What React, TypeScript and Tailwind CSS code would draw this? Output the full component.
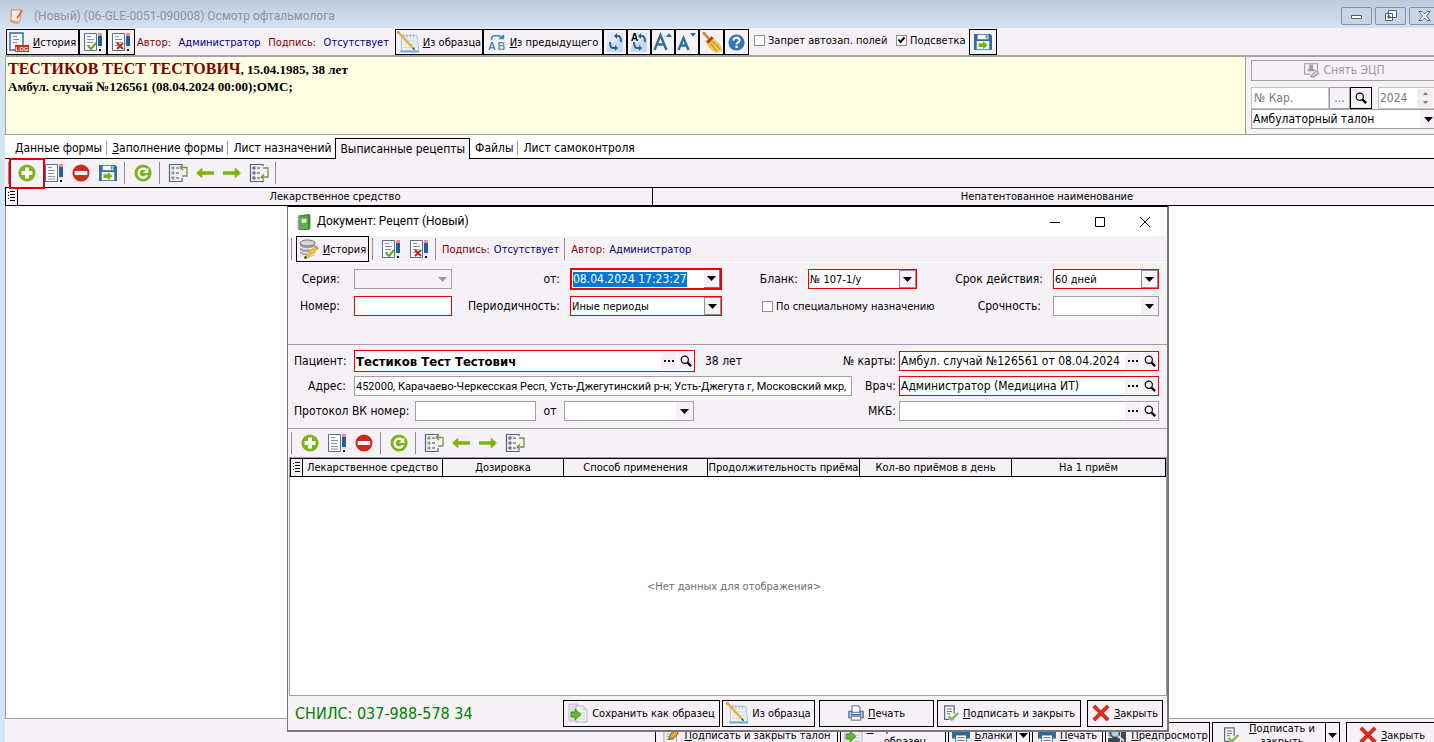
import { Fragment, type ReactNode } from "react";
import clsx from "clsx";

/* ---------- icons ---------- */

function Svg({ size = 20, children }: { size?: number; children: ReactNode }) {
  return (
    <svg width={size} height={size} viewBox="0 0 20 20" fill="none" className="shrink-0" aria-hidden="true">
      {children}
    </svg>
  );
}

function DocPencil({ mark }: { mark?: "check" | "cross" }) {
  return (
    <Svg>
      <path d="M1.5 1.5h12v17h-12z" fill="#fbfafb" stroke="#5b7088" />
      <path d="M4 4.5h4M4 7.5h7M4 10.5h6M4 13.5h3" stroke="#8a929c" />
      {!mark && <path d="M6 13.5h5M4 16h7" stroke="#8a929c" />}
      <path d="M15 1h4v3h-4z" fill="#f08d88" />
      <path d="M15 4h4v10h-4z" fill="#1f609c" />
      <path d="M15 14h4l-1 2h-2z" fill="#ecdcc0" />
      <path d="M16 17h2v2h-2z" fill="#111" />
      {mark === "check" && <path d="m5 14 3 3 5-6" stroke="#66a51c" strokeWidth="2" />}
      {mark === "cross" && <path d="m6 11 6 6m0-6-6 6" stroke="#b92a1e" strokeWidth="2" />}
    </Svg>
  );
}

const LogIcon = () => (
  <Svg size={20}>
    <path d="M1 1h13v17H1z" fill="#fff" stroke="#2f689b" strokeWidth="1.4" />
    <path d="M4 4.5h4M4 7.5h6M4 10.5h4" stroke="#888" />
    <path d="M6 13h14v7H6z" fill="#c22d20" />
    <text x="6.5" y="19" fontSize="6" fontWeight="bold" fill="#fff" fontFamily="Liberation Sans, sans-serif">LOG</text>
  </Svg>
);

const PlusIcon = () => (
  <Svg size={18}>
    <circle cx="10" cy="10" r="9.5" fill="#7ab41a" />
    <path d="M10 4v12M4 10h12" stroke="#fff" strokeWidth="4.4" />
  </Svg>
);

const MinusIcon = () => (
  <Svg size={18}>
    <circle cx="10" cy="10" r="9.5" fill="#cc2a1b" />
    <path d="M3 10h14" stroke="#fff" strokeWidth="4.4" />
  </Svg>
);

const RefreshIcon = () => (
  <Svg size={18}>
    <circle cx="10" cy="10" r="9.5" fill="#7ab41a" />
    <path d="M14.5 12.5a5 5 0 1 1-.5-5.500" stroke="#fff" strokeWidth="2.6" />
    <path d="M16 4v6h-6z" fill="#fff" />
  </Svg>
);

const SaveIcon = () => (
  <Svg size={18}>
    <path d="M0 1h18l2 2v16H0z" fill="#2e6f9f" />
    <path d="M4 2h12v5H4zM3 9h14v9H3z" fill="#f5f4f4" />
    <path d="M13 2h2v4h-2z" fill="#8a8a8a" />
    <path d="M5 11.5h5V9l5 4.500-5 4.500v-2.500H5z" fill="#7bb512" />
  </Svg>
);

function ArrowIcon({ left }: { left?: boolean }) {
  return (
    <Svg size={18}>
      <path d={left ? "M0 10l7-6v4h13v4H7v4z" : "M20 10l-7-6v4H0v4h13v4z"} fill="#7cb60c" />
    </Svg>
  );
}

function TreeIcon({ up }: { up?: boolean }) {
  return (
    <Svg size={20}>
      <path d={up ? "M14 3V1.500H1.500v17H14V15" : "M14 3V1.500H1.500v17H14V17"} stroke="#4f6880" strokeWidth="1.2" />
      <path d="M4 4h2v2H4zM4 9h2v2H4zM4 14h2v2H4z" stroke={up ? "#5f8a35" : "#444"} strokeWidth=".9" />
      <path d="M8 5h3M8 10h3M8 15h3" stroke="#444" />
      {up ? (
        <path d="M12 4.500h7V13h-5m-2-8.500 3-2.500m-3 2.500L15 7" stroke="#74973f" strokeWidth="1.300" />
      ) : (
        <path d="M14 5h5v9h-7m0 0 3-2.500M12 14l3 2.500" stroke="#74973f" strokeWidth="1.300" />
      )}
    </Svg>
  );
}

const NotebookIcon = () => (
  <Svg size={22}>
    <path d="M4 4h14l2 15H4z" fill="#e9f1f8" stroke="#9fc0dc" strokeWidth=".8" />
    <path d="M6 3v3M9 3v3M12 3v3M15 3v3" stroke="#aab4bd" />
    <path d="M6 9h11M6 12h11M6 15h12" stroke="#c9d9e7" strokeWidth=".8" />
    <path d="M3 18.500h17" stroke="#62a3d4" strokeWidth="1.500" />
    <path d="m1 1 14 15" stroke="#f0ad22" strokeWidth="2" />
    <path d="m0 0 2 2" stroke="#e98d78" strokeWidth="2.400" />
    <path d="m14.500 15.500 1.500 1.500" stroke="#333" strokeWidth="1.200" />
  </Svg>
);

const AbIcon = () => (
  <Svg size={18}>
    <text x="0" y="19" fontSize="12" fontWeight="bold" fill="#5289b8" fontFamily="Liberation Sans, sans-serif">A</text>
    <text x="10.500" y="19" fontSize="12" fontWeight="bold" fill="#63a08f" fontFamily="Liberation Sans, sans-serif">B</text>
    <path d="M4 8V6q0-3 3-3h4q4 0 5 3" stroke="#4186bd" strokeWidth="1.800" />
    <path d="M11 7h7V1z" fill="#4186bd" />
  </Svg>
);

function SyncPage({ letter }: { letter?: boolean }) {
  return (
    <Svg>
      <path d="M2 0h16v20H2z" fill="#dfebf8" />
      <path d="M2 15 18 5v15H2z" fill="#c3daf1" />
      <path d="M11 4h2q3 0 3 6" stroke="#2c5f8c" strokeWidth="2" />
      <path d="M12 1v6L9 4z" fill="#2c5f8c" />
      <path d="M5 10q0 6 3 6h2" stroke="#2c5f8c" strokeWidth="2" />
      <path d="M10 13v6l3-3z" fill="#2c5f8c" />
      {letter && <text x="2" y="9" fontSize="10" fontWeight="bold" fill="#000" fontFamily="Liberation Sans, sans-serif">A</text>}
    </Svg>
  );
}

function FontSizeIcon({ up }: { up?: boolean }) {
  return (
    <Svg size={20}>
      <path
        d={up ? "M1.500 18 7.500 3l6 15M4 12.500h7" : "M1.500 18 6.500 6l5 12M3.500 13.500h6"}
        stroke="#2f6e9e"
        strokeWidth="2.400"
      />
      <path d={up ? "m13 5 3-4 3 4z" : "m13 1 3 4 3-4z"} fill="#2f6e9e" />
    </Svg>
  );
}

const BroomIcon = () => (
  <Svg size={21}>
    <path d="m2 0 6 7" stroke="#c38a45" strokeWidth="2.600" />
    <path d="m4 9 6-5 8 8q2 3 2 6l-6 2q-6-3-10-11z" fill="#e9c94d" />
    <path d="m5 9 5-5 2 2-5 5z" fill="#bf3426" />
    <path d="m9 11 6 7m-4-9 7 7" stroke="#b4922a" />
  </Svg>
);

const HelpIcon = () => (
  <Svg size={17}>
    <circle cx="10" cy="10" r="9.500" fill="#3a77b8" />
    <path d="M6.500 7.500q0-3 3.500-3t3.500 3q0 1.500-2 2.500-1.500 1-1.500 2.500" stroke="#fff" strokeWidth="2.400" />
    <path d="M8.800 14h2.600v2.500H8.800z" fill="#fff" />
  </Svg>
);

const DatabaseIcon = () => (
  <Svg>
    <path d="M1 4v12q8 4 15 0V4z" fill="#a5a5a5" />
    <path d="M1 8q7 4 15 0M1 12q7 4 15 0M1 15q7 4 15 0" stroke="#fff" />
    <ellipse cx="8.500" cy="4" rx="7.500" ry="3" fill="#d6d6d6" stroke="#777" />
    <path d="m8 18 9-9" stroke="#f3bd2b" strokeWidth="4" />
    <path d="m16 7 3 3" stroke="#e98275" strokeWidth="2.400" />
    <path d="m5 20 1-3.500L8.500 19z" fill="#333" />
  </Svg>
);

const BookIcon = () => (
  <Svg size={16}>
    <path d="M3 2 16 0l2 1v17l-2 2H3z" fill="#3f8b35" />
    <path d="M4 3h11v16H4z" fill="#63ab50" />
    <path d="M1 5h4M1 8h4M1 11h4M1 14h4M1 17h4" stroke="#999" />
    <path d="M7 6h6v5H7z" fill="#d8efcf" />
  </Svg>
);

const PageIcon = () => (
  <Svg size={16}>
    <path d="M4 2q7 1 12 0l-1 14q-1 3-3 3-6 0-9-2 2-7 1-15z" fill="#fae7da" stroke="#d9956e" strokeWidth="1.500" />
    <path d="m18 3-7 10" stroke="#b45745" strokeWidth="1.600" />
    <path d="M3 15q4 3 10 3" stroke="#d79a75" strokeWidth="2" />
  </Svg>
);

const CopyIcon = () => (
  <Svg>
    <path d="M1 1h9v17H1z" fill="#e0e0e0" stroke="#c0c0c0" />
    <path d="M8 3h7l4 4v12H8z" fill="#f1f2f2" stroke="#b5b9bb" />
    <path d="M15 3v4h4M11 10h6M11 13h6M11 16h6" stroke="#c3c6c8" />
    <path d="M3 9h4V6l6 5.500L7 17v-3H3z" fill="#68b438" stroke="#3b8420" strokeWidth=".8" />
  </Svg>
);

const PrinterIcon = ({ size = 16 }: { size?: number }) => (
  <Svg size={size}>
    <path d="M5 1h8l2 2v6H5z" fill="#fff" stroke="#5476a5" strokeWidth="1.400" />
    <path d="M1 8h4v4h10V8h4v8H1z" fill="#a9c1e2" stroke="#4b6fa5" strokeWidth="1.400" />
    <path d="M4 14h12v5H4z" fill="#f4f4f4" stroke="#555" />
  </Svg>
);

const FlatPrinterIcon = () => (
  <Svg size={18}>
    <path d="M2 1h16v3H2zM0 6h20v8H0z" fill="#2d6999" />
    <path d="M4 10h12v10H4z" fill="#fff" stroke="#41566a" />
    <path d="M6 13h8M6 16h8" stroke="#556" />
  </Svg>
);

const SignIcon = () => (
  <Svg size={16}>
    <path d="M14 11V1H2v17h6" stroke="#5d6b75" strokeWidth="1.500" />
    <path d="M5 5h6M5 8h6M5 11h4" stroke="#6d7a83" strokeWidth="1.300" />
    <path d="m7 14 4 4 8-8" stroke="#86b357" strokeWidth="3" />
  </Svg>
);

const CrossIcon = () => (
  <Svg size={18}>
    <path d="m2 2 16 16M18 2 2 18" stroke="#d53120" strokeWidth="4.400" />
  </Svg>
);

const PenIcon = () => (
  <Svg size={18}>
    <path d="M1 2h14v18H1z" fill="#f2f2f2" stroke="#a5a5a5" />
    <path d="M4 9h5M4 12h4M4 15h8" stroke="#999" />
    <path d="m6 15 3-7 5-3 3 3-4 5z" fill="#eaa631" stroke="#7b5520" />
    <path d="m14 5 4-4 2 2-4 4z" fill="#333" />
  </Svg>
);

const PreviewIcon = () => (
  <Svg size={20}>
    <path d="M2 0h13v11H2z" fill="#edf3f7" stroke="#607184" />
    <path d="M14 6h5v11h-5zM1 13h12v4H1z" fill="#404952" />
    <circle cx="8" cy="8" r="4.500" fill="#a6d4ee" stroke="#33434f" strokeWidth="1.500" />
    <path d="m11 11 6 5" stroke="#dfe5ea" strokeWidth="2" />
  </Svg>
);

const StampIcon = () => (
  <Svg size={15}>
    <path d="M18 9V1H1v14h8" stroke="#999" strokeWidth="1.400" />
    <path d="M7 2h5v6h2v3H5V8h2z" fill="#9c9c9c" />
    <path d="m9 18 8-8 3 3-7 6z" fill="#ddd" stroke="#888" strokeWidth="1.400" />
  </Svg>
);

const SearchIcon = () => (
  <Svg size={12}>
    <circle cx="8" cy="8" r="6" stroke="#000" strokeWidth="2" />
    <path d="m12.500 12.500 6 6" stroke="#000" strokeWidth="4" />
  </Svg>
);

function Caret({ gray }: { gray?: boolean }) {
  return (
    <svg width="9" height="5" viewBox="0 0 9 5" className="shrink-0" aria-hidden="true">
      <path d="M0 0h9L4.500 5z" fill={gray ? "#9a9a9a" : "#000"} />
    </svg>
  );
}

const ListMark = () => (
  <svg width="8" height="11" viewBox="0 0 8 11" className="mx-auto" aria-hidden="true">
    <path d="M0 1.500h1M2 .5h5M0 4.500h1M2 3.500h5M0 7.500h1M2 6.500h5M2 9.500h5" stroke="#000" />
  </svg>
);

/* ---------- controls ---------- */

function Hot({ children }: { children: string }) {
  // first letter is the keyboard accelerator
  return (
    <span className="whitespace-nowrap">
      <u>{children[0]}</u>
      {children.slice(1)}
    </span>
  );
}

function PushButton({ className, children, label }: { className?: string; children: ReactNode; label?: string }) {
  return (
    <button
      type="button"
      aria-label={label}
      className={clsx("flex shrink-0 items-center justify-center gap-1 border border-black bg-[#f6f1f6]", className)}
    >
      {children}
    </button>
  );
}

function ToolButton({ label, children }: { label: string; children: ReactNode }) {
  return (
    <button type="button" aria-label={label} className="flex h-6 w-[27px] shrink-0 items-center justify-center">
      {children}
    </button>
  );
}

const Sep = () => <span className="mr-1 ml-[3px] h-[22px] w-px shrink-0 bg-[#8c8c90]" />;

type SelectProps = {
  id: string;
  value: string;
  red?: boolean;
  disabled?: boolean;
  flat?: boolean;
  className?: string;
};

function Select({ id, value, red, disabled, flat, className }: SelectProps) {
  return (
    <div
      className={clsx(
        "relative flex h-5 border",
        red ? "border-[#f00000]" : "border-[#a0a0a0]",
        disabled ? "bg-[#f6f1f6]" : "bg-white",
        className,
      )}
    >
      <select id={id} disabled={disabled} className="min-w-0 flex-1 appearance-none truncate pr-4 pl-px outline-none">
        <option>{value}</option>
      </select>
      <span
        className={clsx(
          "pointer-events-none absolute inset-y-0 right-0 flex w-[17px] items-center justify-center bg-[#f6f1f6]",
          !flat && !disabled && "border border-[#909090]",
        )}
      >
        <Caret gray={disabled} />
      </span>
    </div>
  );
}

function LookupField({ id, value, red, className }: { id: string; value?: string; red?: boolean; className?: string }) {
  return (
    <div className={clsx("flex items-center border bg-white", red ? "border-[#f00000]" : "border-[#a0a0a0]", className)}>
      <input id={id} defaultValue={value} className="min-w-0 flex-1 pl-px outline-none" />
      <button type="button" aria-label="Выбрать" className="flex h-4 w-4 items-center justify-center bg-[#f6f1f6]">
        <svg width="10" height="2" viewBox="0 0 10 2" aria-hidden="true">
          <path d="M0 0h2v2H0zM4 0h2v2H4zM8 0h2v2H8z" />
        </svg>
      </button>
      <button type="button" aria-label="Найти" className="ml-px flex h-4 w-4 items-center justify-center bg-[#f6f1f6]">
        <SearchIcon />
      </button>
    </div>
  );
}

function Tick({ id, checked, className, children }: { id: string; checked?: boolean; className?: string; children: string }) {
  return (
    <span className={clsx("flex shrink-0 items-center gap-[3px] whitespace-nowrap", className)}>
      <span className="relative flex">
        <input id={id} type="checkbox" defaultChecked={checked} className="peer size-[11px] appearance-none border border-[#909090] bg-white" />
        <svg viewBox="0 0 11 11" className="pointer-events-none absolute inset-0 hidden size-[11px] peer-checked:block" fill="none" aria-hidden="true">
          <path d="m2.500 4.500 2 2.500 4-4.500" stroke="#000" strokeWidth="2" />
        </svg>
      </span>
      <label htmlFor={id}>{children}</label>
    </span>
  );
}

function GridTools({ save }: { save?: boolean }) {
  return (
    <>
      <Sep />
      <ToolButton label="Добавить"><PlusIcon /></ToolButton>
      <ToolButton label="Изменить"><DocPencil /></ToolButton>
      <ToolButton label="Удалить"><MinusIcon /></ToolButton>
      {save && <ToolButton label="Сохранить"><SaveIcon /></ToolButton>}
      <Sep />
      <ToolButton label="Обновить"><RefreshIcon /></ToolButton>
      <Sep />
      <ToolButton label="Вверх"><TreeIcon up /></ToolButton>
      <ToolButton label="Назад"><ArrowIcon left /></ToolButton>
      <ToolButton label="Вперёд"><ArrowIcon /></ToolButton>
      <ToolButton label="Вниз"><TreeIcon /></ToolButton>
      {save && <Sep />}
    </>
  );
}

/* ---------- main window ---------- */

function TitleBar() {
  return (
    <header className="flex h-7 shrink-0 items-center bg-linear-to-b from-[#bccada] to-[#d5e3f2] pt-1 pr-0.5 pl-2 text-[#8e959e]">
      <PageIcon />
      <h1 className="ml-2.5 font-[Roboto,sans-serif] text-[12px]">(Новый) (06-GLE-0051-090008) Осмотр офтальмолога</h1>
      <div className="ml-auto flex gap-[3px]">
        {["Свернуть", "Восстановить", "Закрыть окно"].map((name, i) => (
          <button
            key={name}
            type="button"
            aria-label={name}
            className="flex h-[18px] w-[31px] items-center justify-center rounded-xs border border-[#8291a5] bg-[#c7d6e6]"
          >
            <svg width="13" height="12" viewBox="0 0 13 12" fill="#fff" stroke="#555c66" aria-hidden="true">
              {i === 0 && <path d="M1.500 5.500h10v3h-10z" />}
              {i === 1 && <path d="M4.500.500h8v7h-8zM1.500 3.500h7v7h-7zM4 6h2v2H4z" />}
              {i === 2 && <path d="M1 1.500h3l2.500 2.500L9 1.500h3L8.500 6l3.500 4.500H9L6.500 8 4 10.500H1L4.500 6z" />}
            </svg>
          </button>
        ))}
      </div>
    </header>
  );
}

function MainToolbar() {
  return (
    <div className="flex h-[29px] shrink-0 items-start border-b-2 border-[#a5a1a8] bg-[#f6f1f6] pt-px pl-px">
      <PushButton className="h-[26px] w-[73px] bg-[#ece6ec]"><LogIcon /><Hot>История</Hot></PushButton>
      <PushButton className="h-[26px] w-7" label="Подписать"><DocPencil mark="check" /></PushButton>
      <PushButton className="h-[26px] w-7" label="Снять подпись"><DocPencil mark="cross" /></PushButton>
      <div className="flex h-[26px] w-[260px] items-center justify-between pr-1.5 pl-0.5 whitespace-nowrap text-[#000080]">
        <span className="text-[#800000]">Автор:</span>
        <span>Администратор</span>
        <span className="text-[#800000]">Подпись:</span>
        <span>Отсутствует</span>
      </div>
      <PushButton className="h-[26px] w-[88px]"><NotebookIcon /><Hot>Из образца</Hot></PushButton>
      <PushButton className="h-[26px] w-[120px]"><AbIcon /><Hot>Из предыдущего</Hot></PushButton>
      <PushButton className="h-[26px] w-6" label="Обновить"><SyncPage /></PushButton>
      <PushButton className="h-[26px] w-6" label="Обновить всё"><SyncPage letter /></PushButton>
      <PushButton className="h-[26px] w-6" label="Крупнее"><FontSizeIcon up /></PushButton>
      <PushButton className="h-[26px] w-6" label="Мельче"><FontSizeIcon /></PushButton>
      <PushButton className="h-[26px] w-[25px]" label="Очистить"><BroomIcon /></PushButton>
      <PushButton className="h-[26px] w-[25px]" label="Справка"><HelpIcon /></PushButton>
      <Tick id="autofill" className="ml-[5px] h-[22px] w-[142px]">Запрет автозап. полей</Tick>
      <Tick id="highlight" className="h-[22px] w-[73px]" checked>Подсветка</Tick>
      <PushButton className="h-[26px] w-7" label="Сохранить"><SaveIcon /></PushButton>
    </div>
  );
}

function PatientPanel() {
  return (
    <div className="flex h-[78px] shrink-0 border-b border-[#a0a0a4] bg-[#f6f1f6]">
      <section className="flex-1 border-x border-[#a0a0a4] bg-[#ffffe1] pt-[3px] pl-0.5 font-['Liberation_Serif',serif] text-[13px] leading-4 font-bold">
        <p className="leading-[18px]"><span className="text-[16px] text-[#800000]">ТЕСТИКОВ ТЕСТ ТЕСТОВИЧ</span>, 15.04.1985, 38 лет</p>
        <p>Амбул. случай №126561 (08.04.2024 00:00);ОМС;</p>
      </section>
      <aside className="w-[196px] pt-[3px] pr-1 pl-[5px] text-[12px]">
        <button type="button" disabled className="flex h-[21px] w-full items-center justify-center gap-1 border border-[#a0a0a4] text-[#9a9a9a]">
          <StampIcon />Снять ЭЦП
        </button>
        <div className="mt-1.5 flex h-[22px] text-[#787878]">
          <input aria-label="Номер карты" defaultValue="№ Кар." className="w-[78px] border border-[#c4c4c4] bg-white pl-0.5" />
          <button type="button" aria-label="Выбрать карту" className="w-[21px] border border-[#a0a0a4]">...</button>
          <button type="button" aria-label="Найти карту" className="flex w-[22px] items-center justify-center border border-black"><SearchIcon /></button>
          <div className="ml-1.5 flex min-w-0 flex-1 border border-[#c4c4c4] bg-white">
            <input aria-label="Год" defaultValue="2024" className="min-w-0 flex-1 pl-px" />
            <span className="flex w-5 flex-col gap-px bg-white py-px pr-1">
              <span className="flex flex-1 items-center justify-center bg-[#f0ecf0]">
                <svg width="5" height="3" viewBox="0 0 5 3" fill="#777" aria-hidden="true"><path d="M0 3h5L2.500 0z" /></svg>
              </span>
              <span className="flex flex-1 items-center justify-center bg-[#f0ecf0]">
                <svg width="5" height="3" viewBox="0 0 5 3" fill="#777" aria-hidden="true"><path d="M0 0h5L2.500 3z" /></svg>
              </span>
            </span>
          </div>
        </div>
        <Select id="talon" value="Амбулаторный талон" flat className="w-full" />
      </aside>
    </div>
  );
}

const tabs = ["Данные формы", "Заполнение формы", "Лист назначений", "Выписанные рецепты", "Файлы", "Лист самоконтроля"];
const ACTIVE = 3;

function TabStrip() {
  return (
    <nav className="flex h-6 shrink-0 items-end border-b border-black bg-white pl-[5px] text-[12px]">
      {tabs.map((name, i) => (
        <Fragment key={name}>
          {i > 0 && i !== ACTIVE && i !== ACTIVE + 1 && <span className="mb-[3px] h-3.5 w-px bg-[#a0a0a4]" />}
          <button
            type="button"
            className={clsx(
              "h-[21px] pr-1 whitespace-nowrap",
              i === ACTIVE ? "-mb-px border border-b-0 border-black bg-[#f6f1f6] pl-1" : "pt-px pl-[5px]",
            )}
          >
            {i < 2 ? <Hot>{name}</Hot> : name}
          </button>
        </Fragment>
      ))}
    </nav>
  );
}

function MainFooter() {
  return (
    <footer className="flex h-6 shrink-0 items-start justify-end gap-0.5 border-t border-[#a0a0a4] bg-[#f6f1f6] pt-[3px] pr-1 leading-[13px]">
      <PushButton className="h-[26px] w-[183px]"><PenIcon /><Hot>Подписать и закрыть талон</Hot></PushButton>
      <PushButton className="h-[26px] w-[106px]">
        <CopyIcon />
        <span className="whitespace-nowrap"><u>С</u>охранить как<br />образец</span>
      </PushButton>
      <span className="flex">
        <PushButton className="h-[26px] w-[69px]"><FlatPrinterIcon /><Hot>Бланки</Hot></PushButton>
        <PushButton className="-ml-px h-[26px] w-[14px]" label="Список бланков"><Caret /></PushButton>
      </span>
      <PushButton className="h-[26px] w-[71px]"><FlatPrinterIcon /><Hot>Печать</Hot></PushButton>
      <PushButton className="h-[26px] w-[105px]"><PreviewIcon /><Hot>Предпросмотр</Hot></PushButton>
      <span className="flex">
        <PushButton className="h-[26px] w-[114px] gap-2.5">
          <SignIcon />
          <span><u>П</u>одписать и<br />закрыть</span>
        </PushButton>
        <PushButton className="-ml-px h-[26px] w-[15px]" label="Варианты подписи"><Caret /></PushButton>
      </span>
      <PushButton className="ml-1 h-[26px] w-[92px]"><CrossIcon /><Hot>Закрыть</Hot></PushButton>
    </footer>
  );
}

/* ---------- prescription dialog ---------- */

const columns = ["Лекарственное средство", "Дозировка", "Способ применения", "Продолжительность приёма", "Кол-во приёмов в день", "На 1 приём"];

function PrescriptionDialog() {
  return (
    <section
      role="dialog"
      aria-label="Рецепт"
      className="absolute top-[206px] left-[287px] flex h-[526px] w-[882px] flex-col border-2 border-t border-l border-[#77777b] border-t-black bg-[#f6f1f6]"
    >
      <header className="flex h-[29px] shrink-0 items-center bg-white pr-3 pl-2">
        <BookIcon />
        <h2 className="ml-[5px] font-[Roboto,sans-serif] text-[12px]">Документ: Рецепт (Новый)</h2>
        <div className="ml-auto flex gap-[25px]">
          {["M0 5.500h10", "M.500.500h9v9h-9z", "m0 0 10 10M10 0 0 10"].map((d, i) => (
            <button key={d} type="button" aria-label={["Свернуть", "Развернуть", "Закрыть"][i]} className="flex size-5 items-center justify-center">
              <svg width="10" height="10" viewBox="0 0 10 10" fill="none" stroke="#000" aria-hidden="true"><path d={d} /></svg>
            </button>
          ))}
        </div>
      </header>

      <div className="flex h-[27px] shrink-0 items-center border-b border-white">
        <Sep />
        <PushButton className="h-[26px] w-[73px] bg-[#ece6ec]"><DatabaseIcon /><Hot>История</Hot></PushButton>
        <Sep />
        <button type="button" aria-label="Подписать рецепт" className="flex w-7 justify-center"><DocPencil mark="check" /></button>
        <button type="button" aria-label="Снять подпись рецепта" className="flex w-7 justify-center"><DocPencil mark="cross" /></button>
        <span className="mr-1.5 ml-0.5 h-[22px] w-px bg-[#8c8c90]" />
        <p className="flex gap-1 text-[#000080]"><span className="text-[#800000]">Подпись:</span>Отсутствует</p>
        <span className="mr-1.5 ml-[5px] h-[22px] w-px bg-[#8c8c90]" />
        <p className="flex gap-1 text-[#000080]"><span className="text-[#800000]">Автор:</span>Администратор</p>
      </div>

      <div className="grid h-[82px] shrink-0 grid-cols-[66px_98px_118px_152px_86px_109px_136px_106px] content-start items-center gap-y-1.5 border-b border-[#a0a0a4] pt-[5px]">
        <label htmlFor="series" className="pr-3.5 text-right text-[12px]">Серия:</label>
        <Select id="series" value="" disabled />
        <label htmlFor="date" className="pr-2.5 text-right text-[12px]">от:</label>
        <div className="flex h-[22px] items-center border-2 border-[#f00000] bg-white pl-px text-[12px]">
          <input id="date" defaultValue="08.04.2024 17:23:27" className="field-sizing-content bg-[#0078d7] text-white outline-none" />
          <button type="button" aria-label="Календарь" className="ml-auto flex h-full w-4 items-center justify-center border-r border-b border-[#77777b] bg-[#f6f1f6]"><Caret /></button>
        </div>
        <label htmlFor="blank" className="pr-2.5 text-right text-[12px]">Бланк:</label>
        <Select id="blank" value="№ 107-1/у" red />
        <label htmlFor="term" className="pr-2.5 text-right text-[12px]">Срок действия:</label>
        <Select id="term" value="60 дней" red />

        <label htmlFor="number" className="pr-3.5 text-right text-[12px]">Номер:</label>
        <input id="number" className="h-5 border border-[#f00000] bg-white" />
        <label htmlFor="period" className="pr-2.5 text-right text-[12px]">Периодичность:</label>
        <Select id="period" value="Иные периоды" red />
        <Tick id="special" className="col-span-2 pl-10">По специальному назначению</Tick>
        <label htmlFor="urgency" className="pr-3 text-right text-[12px]">Срочность:</label>
        <Select id="urgency" value="" flat />
      </div>

      <div className="flex h-[84px] shrink-0 flex-col gap-[3px] border-b border-[#a0a0a4] pt-[5px] pr-2 pl-1.5 text-[12px]">
        <div className="flex h-[22px] items-center">
          <label htmlFor="patient" className="w-[60px] pr-2 text-right">Пациент:</label>
          <LookupField id="patient" value="Тестиков Тест Тестович" red className="h-[22px] w-[341px] text-[13px] font-bold" />
          <span className="ml-2.5">38 лет</span>
          <label htmlFor="card" className="ml-auto pr-[3px]">№ карты:</label>
          <LookupField id="card" value="Амбул. случай №126561 от 08.04.2024" red className="h-5 w-[260px]" />
        </div>
        <div className="flex h-[22px] items-center">
          <label htmlFor="address" className="w-[60px] pr-2 text-right">Адрес:</label>
          <input
            id="address"
            defaultValue="452000, Карачаево-Черкесская Респ, Усть-Джегутинский р-н; Усть-Джегута г, Московский мкр,"
            className="h-5 w-[498px] border border-[#a0a0a0] bg-white pl-px font-[Roboto,sans-serif] text-[11px]"
          />
          <label htmlFor="doctor" className="ml-auto pr-[3px]">Врач:</label>
          <LookupField id="doctor" value="Администратор (Медицина ИТ)" red className="h-5 w-[260px]" />
        </div>
        <div className="flex h-[22px] items-center">
          <label htmlFor="protocol" className="w-[121px] whitespace-nowrap">Протокол ВК номер:</label>
          <input id="protocol" className="h-5 w-[121px] border border-[#a0a0a0] bg-white" />
          <label htmlFor="protocolDate" className="w-7 text-center">от</label>
          <Select id="protocolDate" value="" flat className="w-[130px]" />
          <label htmlFor="icd" className="ml-auto pr-[3px]">МКБ:</label>
          <LookupField id="icd" className="h-5 w-[260px]" />
        </div>
      </div>

      <div className="flex h-7 shrink-0 items-center"><GridTools /></div>

      <div className="ml-px flex flex-1 flex-col border border-[#a0a0a4] bg-white">
        <table className="w-full table-fixed border-collapse bg-[#f6f1f6]">
          <colgroup>
            <col className="w-[12px]" />
            <col className="w-[140px]" />
            <col className="w-[121px]" />
            <col className="w-[144px]" />
            <col className="w-[152px]" />
            <col className="w-[152px]" />
            <col />
          </colgroup>
          <thead>
            <tr className="h-[18px]">
              <th className="border border-black p-0" aria-label="Меню столбцов"><ListMark /></th>
              {columns.map((name) => (
                <th key={name} className="border border-black p-0 font-normal whitespace-nowrap">{name}</th>
              ))}
            </tr>
          </thead>
        </table>
        <p className="flex flex-1 items-center justify-center pl-3 text-[#6d6d6d]">&lt;Нет данных для отображения&gt;</p>
      </div>

      <footer className="flex h-[34px] shrink-0 items-center pr-1 pl-[7px]">
        <p className="text-[16px] whitespace-nowrap text-[#008000]">СНИЛС: 037-988-578 34</p>
        <PushButton className="ml-auto h-[27px] w-[157px]"><CopyIcon />Сохранить как образец</PushButton>
        <PushButton className="ml-0.5 h-[27px] w-[93px]"><NotebookIcon />Из образца</PushButton>
        <PushButton className="ml-1 h-[27px] w-[115px]"><PrinterIcon /><Hot>Печать</Hot></PushButton>
        <PushButton className="ml-[3px] h-[27px] w-[144px]"><SignIcon /><Hot>Подписать и закрыть</Hot></PushButton>
        <PushButton className="ml-1.5 h-[27px] w-[76px]"><CrossIcon /><Hot>Закрыть</Hot></PushButton>
      </footer>
    </section>
  );
}

export default function App() {
  return (
    <main className="relative h-screen overflow-hidden bg-[#d5e3f2] font-['DejaVu_Sans_Condensed','DejaVu_Sans',sans-serif] text-[11px] leading-[15px] text-black">
      {/* the window runs a little past the right edge of the screen */}
      <div className="flex h-full w-[calc(100%+8px)] flex-col">
        <TitleBar />
        <div className="ml-[5px] flex min-h-0 flex-1 flex-col bg-white">
          <MainToolbar />
          <PatientPanel />
          <TabStrip />
          <div className="relative flex h-7 shrink-0 items-center bg-[#f6f1f6]">
            <GridTools save />
            <span className="pointer-events-none absolute -top-px left-1 h-[31px] w-9 border-2 border-[#dc0000]" />
          </div>
          <table className="w-full shrink-0 table-fixed border-collapse bg-[#f6f1f6]">
            <colgroup>
              <col className="w-[12px]" />
              <col className="w-[635px]" />
              <col />
            </colgroup>
            <thead>
              <tr className="h-[18px]">
                <th className="border border-black p-0" aria-label="Меню столбцов"><ListMark /></th>
                <th className="border border-black p-0 font-normal">Лекарственное средство</th>
                <th className="border border-black p-0 font-normal">Непатентованное наименование</th>
              </tr>
            </thead>
          </table>
          <div className="flex-1 border-l border-[#a0a0a4]" />
          <MainFooter />
        </div>
      </div>
      <PrescriptionDialog />
    </main>
  );
}
